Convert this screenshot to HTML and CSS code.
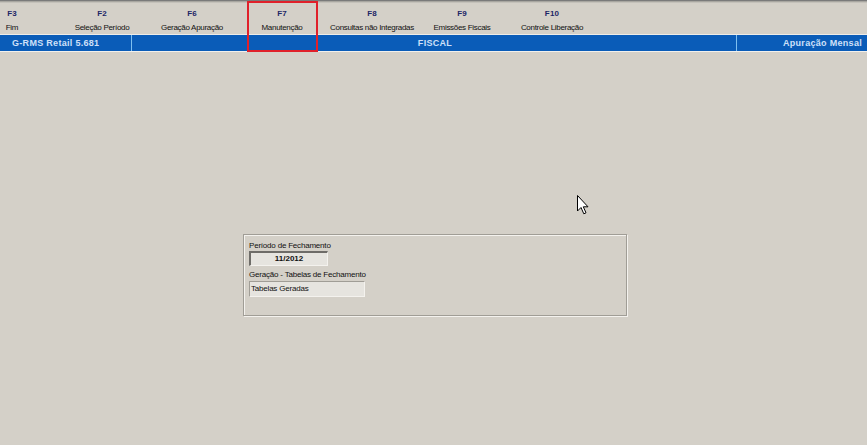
FILE: index.html
```html
<!DOCTYPE html>
<html lang="pt">
<head>
<meta charset="utf-8">
<title>G-RMS Retail - FISCAL</title>
<link rel="stylesheet" href="styles.css">
</head>
<body>
<div class="app">
  <div class="topline"></div>
  <div class="keys">
    <div class="key first"><span class="k">F3</span><span class="d">Fim</span></div>
    <div class="key"><span class="k">F2</span><span class="d">Seleção Período</span></div>
    <div class="key"><span class="k">F6</span><span class="d">Geração Apuração</span></div>
    <div class="key"><span class="k">F7</span><span class="d">Manutenção</span></div>
    <div class="key"><span class="k">F8</span><span class="d">Consultas não Integradas</span></div>
    <div class="key"><span class="k">F9</span><span class="d">Emissões Fiscais</span></div>
    <div class="key"><span class="k">F10</span><span class="d">Controle Liberação</span></div>
  </div>
  <div class="bar">
    <div class="seg left">G-RMS Retail 5.681</div>
    <div class="seg mid">FISCAL</div>
    <div class="seg right">Apuração Mensal</div>
  </div>
  <div class="content">
    <div class="panel">
      <div class="lbl">Período de Fechamento</div>
      <div class="field f1">11/2012</div>
      <div class="lbl l2">Geração - Tabelas de Fechamento</div>
      <div class="field f2">Tabelas Geradas</div>
    </div>
  </div>
  <div class="highlight"></div>
  <svg class="cursor" width="13" height="20" viewBox="0 0 13 20">
    <path d="M0.5 0.5 L0.5 16 L4 12.5 L6.8 18.8 L9 17.8 L6.3 11.8 L11 11.8 Z" fill="#ffffff" stroke="#000000" stroke-width="1"/>
  </svg>
</div>
</body>
</html>
```
FILE: styles.css
```css
html, body {
  margin: 0;
  padding: 0;
  background: #d4d0c8;
}
.app {
  position: relative;
  width: 867px;
  height: 445px;
  overflow: hidden;
  font-family: "Liberation Sans", Arial, sans-serif;
}
.topline {
  height: 1px;
  background: #7a7a7a;
  border-bottom: 1px solid #a8a6a0;
  box-shadow: 0 1px 0 #c4c1ba;
}
.keys {
  display: flex;
  height: 33px;
  border-bottom: 1px solid #eeece8;
  box-sizing: border-box;
}
.key {
  width: 90px;
  display: flex;
  flex-direction: column;
  align-items: center;
  padding-top: 7px;
  box-sizing: border-box;
}
.key.first {
  width: 24px;
  margin-right: 33px;
}
.k {
  font-size: 8px;
  font-weight: bold;
  color: #1c2566;
  line-height: 9px;
  letter-spacing: 0.2px;
}
.d {
  font-size: 8px;
  color: #111111;
  line-height: 9px;
  margin-top: 5px;
  letter-spacing: -0.3px;
  white-space: nowrap;
}
.bar {
  display: flex;
  height: 16px;
  background: #0a5cb8;
  color: #cfe0f8;
  font-size: 9px;
  font-weight: bold;
  line-height: 16px;
  letter-spacing: 0.3px;
  border-bottom: 1px solid #f2f0ec;
}
.seg {
  white-space: nowrap;
}
.seg.left {
  width: 132px;
  padding-left: 12px;
  box-sizing: border-box;
  border-right: 1px solid #7fc0f0;
}
.seg.mid {
  width: 605px;
  text-align: center;
  border-right: 1px solid #7fc0f0;
  box-sizing: border-box;
  padding-left: 2px;
}
.seg.right {
  flex: 1;
  text-align: right;
  padding-right: 5px;
}
.content {
  padding-top: 182px;
  padding-left: 243px;
}
.panel {
  width: 384px;
  height: 82px;
  box-sizing: border-box;
  border: 1px solid #a09d96;
  box-shadow: inset 1px 1px 0 #f4f2ee, 1px 1px 0 #f4f2ee;
  padding: 6px 5px 0 5px;
}
.lbl {
  font-size: 8px;
  line-height: 10px;
  color: #111111;
  letter-spacing: -0.2px;
  white-space: nowrap;
}
.l2 {
  margin-top: 4px;
}
.field {
  box-sizing: border-box;
  background: #e6e4df;
  border-top: 2px solid #6e6c68;
  border-left: 2px solid #6e6c68;
  border-right: 1px solid #f4f2ee;
  border-bottom: 1px solid #f4f2ee;
  font-size: 8px;
  color: #111111;
  white-space: nowrap;
}
.f1 {
  width: 79px;
  height: 15px;
  line-height: 12px;
  text-align: center;
  font-weight: bold;
  margin-top: 0;
}
.f2 {
  width: 116px;
  height: 16px;
  line-height: 13px;
  padding-left: 1px;
  margin-top: 1px;
  border-top-width: 1px;
  border-left-width: 1px;
  border-top-color: #a09d96;
  border-left-color: #a09d96;
  letter-spacing: -0.2px;
}
.highlight {
  position: absolute;
  left: 247px;
  top: 1px;
  width: 71px;
  height: 51px;
  box-sizing: border-box;
  border: 2px solid #e0202a;
}
.cursor {
  position: absolute;
  left: 577px;
  top: 195px;
}
```
